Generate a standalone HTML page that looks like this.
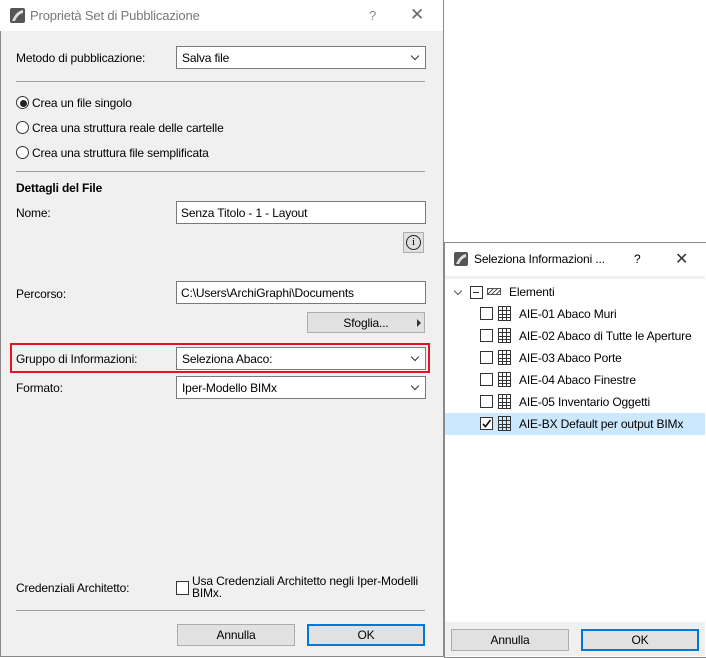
<html><head><style>
body{margin:0;width:706px;height:657px;background:#fff;font-family:"Liberation Sans",sans-serif;font-size:12px;color:#000;position:relative;overflow:hidden;letter-spacing:-0.15px}
.a{position:absolute}
.dd{position:absolute;background:#fff;border:1px solid #7a7a7a;box-sizing:border-box;padding-left:5px;line-height:22px}
.dd::after{content:"";position:absolute;right:7px;top:6px;width:5px;height:5px;border-right:1px solid #333;border-bottom:1px solid #333;transform:rotate(45deg)}
.in{position:absolute;background:#fff;border:1px solid #7a7a7a;box-sizing:border-box;padding-left:4px;line-height:22px}
.hr{position:absolute;height:1px;background:#a0a0a0}
.rb{position:absolute;width:11px;height:11px;border:1px solid #333;border-radius:50%;background:#fff}
.btn{position:absolute;background:#e1e1e1;border:1px solid #adadad;box-sizing:border-box;text-align:center;line-height:20px}
.ok{border:2px solid #0078d7;line-height:18px}
.cb{position:absolute;width:11px;height:11px;border:1px solid #333;background:#fff}
.grid{position:absolute;width:13px;height:15px;border:1px solid #333;box-sizing:border-box;background:
linear-gradient(90deg,transparent 3px,#333 3px,#333 4px,transparent 4px,transparent 7px,#333 7px,#333 8px,transparent 8px),
linear-gradient(transparent 3px,#333 3px,#333 4px,transparent 4px,transparent 7px,#333 7px,#333 8px,transparent 8px,transparent 10px,#333 10px,#333 11px,transparent 11px)}
</style></head><body>
<div class="a" style="left:0;top:0;width:442px;height:656px;border:1px solid #8a8a8a;border-top:none;background:#f0f0f0"></div>
<div class="a" style="left:0;top:0;width:443px;height:31px;background:#fff"></div>
<svg class="a" style="left:10px;top:8px" width="15" height="15"><rect width="15" height="15" rx="2" fill="#555"/><path d="M2 13 Q6 3 13 2 L13 5 Q8 6 5 13Z" fill="#ddd"/></svg>
<div class="a" style="left:30px;top:8px;font-size:13px;color:#777">Proprietà Set di Pubblicazione</div>
<div class="a" style="left:369px;top:8px;font-size:13px;color:#888">?</div>
<div class="a" style="left:410px;top:5px;font-size:17px;color:#666">✕</div>
<div class="a" style="left:16px;top:51px">Metodo di pubblicazione:</div>
<div class="dd" style="left:176px;top:46px;width:250px;height:23px">Salva file</div>
<div class="hr" style="left:16px;top:81px;width:409px"></div>
<div class="rb" style="left:16px;top:96px"></div><div class="a" style="left:20px;top:100px;width:5px;height:5px;border-radius:50%;background:#222;border:1px solid #222"></div>
<div class="a" style="left:32px;top:96px">Crea un file singolo</div>
<div class="rb" style="left:16px;top:121px"></div><div class="a" style="left:32px;top:121px">Crea una struttura reale delle cartelle</div>
<div class="rb" style="left:16px;top:146px"></div><div class="a" style="left:32px;top:146px">Crea una struttura file semplificata</div>
<div class="hr" style="left:16px;top:171px;width:409px"></div>
<div class="a" style="left:16px;top:181px;font-weight:bold">Dettagli del File</div>
<div class="a" style="left:16px;top:206px">Nome:</div>
<div class="in" style="left:176px;top:201px;width:250px;height:23px">Senza Titolo - 1 - Layout</div>
<div class="a" style="left:403px;top:232px;width:21px;height:21px;border:1px solid #adadad;box-sizing:border-box;background:#e1e1e1"></div>
<div class="a" style="left:406px;top:235px;width:13px;height:13px;border:1px solid #222;border-radius:50%;text-align:center;font-size:11px;line-height:13px;font-family:'Liberation Serif',serif">i</div>
<div class="a" style="left:16px;top:287px">Percorso:</div>
<div class="in" style="left:176px;top:281px;width:250px;height:23px">C:\Users\ArchiGraphi\Documents</div>
<div class="btn" style="left:307px;top:312px;width:118px;height:21px">Sfoglia...</div>
<div class="a" style="left:417px;top:319px;border-left:4px solid #333;border-top:4px solid transparent;border-bottom:4px solid transparent"></div>
<div class="a" style="left:10px;top:343px;width:416px;height:26px;border:2px solid #e81123"></div>
<div class="a" style="left:16px;top:352px">Gruppo di Informazioni:</div>
<div class="dd" style="left:176px;top:347px;width:250px;height:23px">Seleziona Abaco:</div>
<div class="a" style="left:16px;top:381px">Formato:</div>
<div class="dd" style="left:176px;top:376px;width:250px;height:23px">Iper-Modello BIMx</div>
<div class="a" style="left:16px;top:581px">Credenziali Architetto:</div>
<div class="cb" style="left:176px;top:581px;height:12px"></div>
<div class="a" style="left:192px;top:575px;line-height:12px">Usa Credenziali Architetto negli Iper-Modelli<br>BIMx.</div>
<div class="hr" style="left:16px;top:610px;width:409px"></div>
<div class="btn" style="left:177px;top:624px;width:118px;height:22px">Annulla</div>
<div class="btn ok" style="left:307px;top:624px;width:118px;height:22px">OK</div>
<div class="a" style="left:444px;top:242px;width:261px;height:414px;border:1px solid #8a8a8a;background:#fff"></div>
<svg class="a" style="left:454px;top:252px" width="14" height="14"><rect width="14" height="14" rx="2" fill="#555"/><path d="M2 12 Q6 3 12 2 L12 5 Q8 6 5 12Z" fill="#ddd"/></svg>
<div class="a" style="left:474px;top:252px">Seleziona Informazioni ...</div>
<div class="a" style="left:634px;top:252px">?</div>
<div class="a" style="left:675px;top:249px;font-size:16px;color:#333">✕</div>
<div class="a" style="left:445px;top:276px;width:260px;height:3px;background:#f0f0f0"></div>
<div class="a" style="left:455px;top:288px;width:5px;height:5px;border-right:1px solid #555;border-bottom:1px solid #555;transform:rotate(45deg)"></div>
<div class="a" style="left:470px;top:286px;width:11px;height:11px;border:1px solid #333"></div><div class="a" style="left:473px;top:292px;width:6px;height:1px;background:#333"></div>
<div class="a" style="left:487px;top:288px;width:14px;height:7px;border:1px solid #555;box-sizing:border-box;background:repeating-linear-gradient(135deg,#555 0 1px,#fff 1px 3px)"></div>
<div class="a" style="left:509px;top:285px">Elementi</div>
<div class="a" style="left:445px;top:413px;width:260px;height:22px;background:#cce8ff"></div>
<div class="cb" style="left:480px;top:307px"></div><div class="grid" style="left:498px;top:306px"></div><div class="a" style="left:519px;top:307px">AIE-01 Abaco Muri</div>
<div class="cb" style="left:480px;top:329px"></div><div class="grid" style="left:498px;top:328px"></div><div class="a" style="left:519px;top:329px">AIE-02 Abaco di Tutte le Aperture</div>
<div class="cb" style="left:480px;top:351px"></div><div class="grid" style="left:498px;top:350px"></div><div class="a" style="left:519px;top:351px">AIE-03 Abaco Porte</div>
<div class="cb" style="left:480px;top:373px"></div><div class="grid" style="left:498px;top:372px"></div><div class="a" style="left:519px;top:373px">AIE-04 Abaco Finestre</div>
<div class="cb" style="left:480px;top:395px"></div><div class="grid" style="left:498px;top:394px"></div><div class="a" style="left:519px;top:395px">AIE-05 Inventario Oggetti</div>
<div class="cb" style="left:480px;top:417px"></div>
<svg class="a" style="left:481px;top:418px" width="11" height="11"><path d="M2 6 L4.5 8.5 L9.5 2" stroke="#111" stroke-width="1.6" fill="none"/></svg>
<div class="grid" style="left:498px;top:416px"></div><div class="a" style="left:519px;top:417px">AIE-BX Default per output BIMx</div>
<div class="a" style="left:445px;top:622px;width:260px;height:34px;background:#f0f0f0"></div>
<div class="btn" style="left:451px;top:629px;width:118px;height:22px">Annulla</div>
<div class="btn ok" style="left:581px;top:629px;width:118px;height:22px">OK</div>
</body></html>
